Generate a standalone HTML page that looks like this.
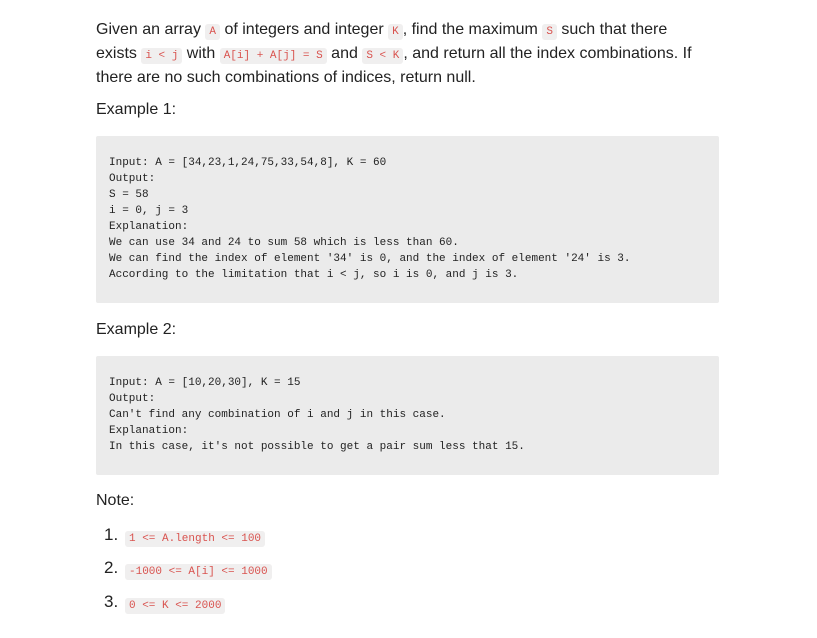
<!DOCTYPE html>
<html><head><style>
body{margin:0;background:#fff;font-family:"Liberation Sans",sans-serif;color:#222;font-size:16px;}
.w{position:absolute;left:96px;width:624px;}
p{margin:0;line-height:24px;}
code{font-family:"Liberation Mono",monospace;font-size:11px;line-height:1;color:#d9534f;background:#f0efef;padding:2px 4px;border-radius:3px;white-space:nowrap;}
pre{margin:0;background:#ebebeb;font-family:"Liberation Mono",monospace;font-size:11px;line-height:16px;color:#222;padding:0 13px;border-radius:2px;}
.n{position:absolute;left:104px;font-size:17px;}
.c{position:absolute;left:125px;}
</style></head><body>
<div class="w" style="top:18px;width:605px"><p>Given an array <code>A</code> of integers and integer <code>K</code>, find the maximum <code>S</code> such that there exists <code>i &lt; j</code> with <code>A[i] + A[j] = S</code> and <code>S &lt; K</code>, and return all the index combinations. If there are no such combinations of indices, return null.</p></div>
<div class="w" style="top:98px"><p>Example 1:</p></div>
<pre class="w" style="top:136px;height:167px;box-sizing:border-box;padding-top:19px;width:623px">Input: A = [34,23,1,24,75,33,54,8], K = 60
Output:
S = 58
i = 0, j = 3
Explanation:
We can use 34 and 24 to sum 58 which is less than 60.
We can find the index of element '34' is 0, and the index of element '24' is 3.
According to the limitation that i &lt; j, so i is 0, and j is 3.</pre>
<div class="w" style="top:318px"><p>Example 2:</p></div>
<pre class="w" style="top:356px;height:119px;box-sizing:border-box;padding-top:19px;width:623px">Input: A = [10,20,30], K = 15
Output:
Can't find any combination of i and j in this case.
Explanation:
In this case, it's not possible to get a pair sum less that 15.</pre>
<div class="w" style="top:489px"><p>Note:</p></div>
<div class="n" style="top:525px">1.</div><div class="c" style="top:528px"><code>1 &lt;= A.length &lt;= 100</code></div>
<div class="n" style="top:558px">2.</div><div class="c" style="top:561px"><code>-1000 &lt;= A[i] &lt;= 1000</code></div>
<div class="n" style="top:592px">3.</div><div class="c" style="top:595px"><code>0 &lt;= K &lt;= 2000</code></div>
</body></html>
